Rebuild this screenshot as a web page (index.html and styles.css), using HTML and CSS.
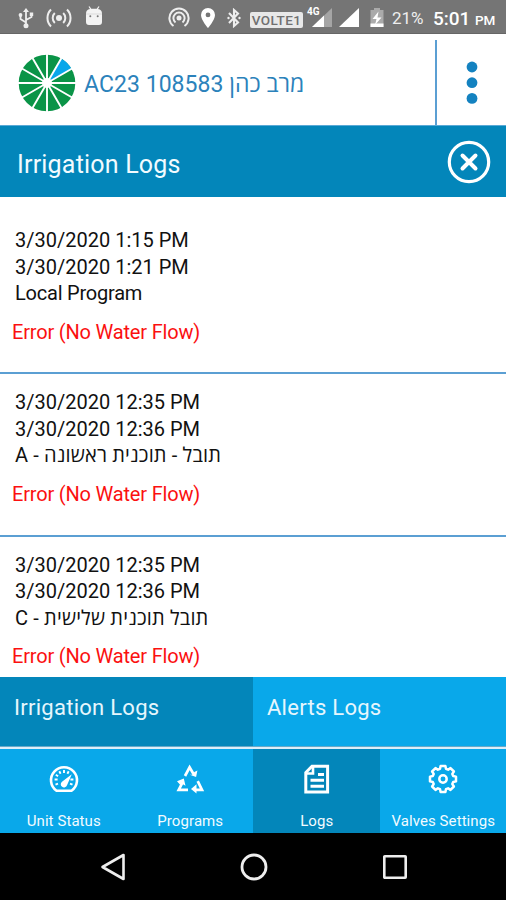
FILE: index.html
```html
<!DOCTYPE html>
<html lang="en">
<head>
<meta charset="utf-8">
<title>Irrigation Logs</title>
<link rel="stylesheet" href="styles.css">
</head>
<body>
<div class="phone">
  <div class="status">
    <svg class="i-usb" width="16" height="22" viewBox="0 0 16 22" fill="none" stroke="#eee" stroke-width="1.8"><path d="M8 3v15M8 15.500L2.500 12V8M8 13l5.500-3V7"/><path d="M5 5l3-4 3 4z" fill="#eee" stroke="none"/><circle cx="8" cy="18.800" r="2.500" fill="#eee" stroke="none"/><circle cx="2.500" cy="8" r="1.900" fill="#eee" stroke="none"/><path d="M11.800 5.500h3.400v3.400h-3.400z" fill="#eee" stroke="none"/></svg>
    <svg class="i-cast" width="26" height="20" viewBox="0 0 26 20" fill="none" stroke="#eee" stroke-width="2"><circle cx="13" cy="10" r="3" fill="#eee" stroke="none"/><path d="M8.800 5a7 7 0 0 0 0 10M17.200 5a7 7 0 0 1 0 10M5 1.500a12 12 0 0 0 0 17M21 1.500a12 12 0 0 1 0 17"/></svg>
    <svg class="i-droid" width="18" height="20" viewBox="0 0 18 20"><path d="M1 7.500Q1 3.500 5 3L3.500.8l1-.6L6.300 2.700h5.400L13.500.2l1 .6L13 3q4 .5 4 4.500V16q0 3-3 3H4q-3 0-3-3z" fill="#f3f3f3"/><path d="M1 8h16" stroke="#ccc" stroke-width=".6"/><circle cx="5.300" cy="10.200" r="1" fill="#777"/><circle cx="12.700" cy="10.200" r="1" fill="#777"/></svg>
    <svg class="i-hot" width="22" height="20" viewBox="0 0 22 20" fill="none" stroke="#eee" stroke-width="2"><circle cx="11" cy="11" r="2.500" fill="#eee" stroke="none"/><path d="M7.500 15.500a5.600 5.600 0 1 1 7 0M5.500 19a9.600 9.600 0 1 1 11 0"/></svg>
    <svg class="i-pin" width="14" height="20" viewBox="0 0 14 20"><path fill="#fff" fill-rule="evenodd" d="M7 0a7 7 0 0 1 7 7c0 5-7 13-7 13S0 12 0 7a7 7 0 0 1 7-7zm0 4.500a2.400 2.400 0 1 0 0 4.800 2.400 2.400 0 0 0 0-4.800z"/></svg>
    <svg class="i-bt" width="14" height="20" viewBox="0 0 14 20" fill="none" stroke="#eee" stroke-width="2.100"><path d="M2 5l9 9.500L7 18V2l4 3.500L2 15"/><circle cx="1.500" cy="10" r="1.200" fill="#eee" stroke="none"/><circle cx="12.500" cy="10" r="1.200" fill="#eee" stroke="none"/></svg>
    <span class="volte">VOLTE1</span>
    <span class="cell"><span class="g4">4G</span><svg width="20" height="19" viewBox="0 0 20 19"><path d="M20 0v19H0z" fill="#a5a5a5"/><path d="M12 7.600V19H0z" fill="#fff"/></svg></span>
    <svg class="i-sig" width="20" height="19" viewBox="0 0 20 19"><path d="M20 0v19H0z" fill="#fff"/></svg>
    <svg class="i-bat" width="14" height="19" viewBox="0 0 14 19"><path d="M4 0h6v2h3.500v17H.5V2H4z" fill="#aaa"/><path d="M.5 15.500h13V19H.5z" fill="#fff"/><path d="M8.500 3.500L2.500 11h4l-1.500 6 6.500-7.500h-4z" fill="#fff"/></svg>
    <span class="pct">21%</span>
    <span class="clock">5:01</span><span class="pm">PM</span>
  </div>

  <header class="head">
    <svg class="logo" width="58" height="58" viewBox="-29 -29 58 58">
      <circle r="28.300" fill="#0a9447"/>
      <path d="M0 0L14.150-24.500A28.300 28.300 0 0 1 24.500-14.150z" fill="#09a7ea"/>
      <path stroke="#fff" stroke-width="1.900" d="M-29 0H29M0-29V29M-25.100-14.500L25.100 14.500M-25.100 14.500L25.100-14.500M-14.500-25.100L14.500 25.100M-14.500 25.100L14.500-25.100"/>
      <circle r="5" fill="#fff"/>
    </svg>
    <span class="unit">AC23 108583 מרב כהן</span>
    <span class="menu"><svg width="12" height="44" viewBox="0 0 12 44" fill="#1482c0"><circle cx="6" cy="6" r="5.400"/><circle cx="6" cy="21.700" r="5.400"/><circle cx="6" cy="37.400" r="5.400"/></svg></span>
  </header>

  <div class="title">
    <h1>Irrigation Logs</h1>
    <svg width="44" height="44" viewBox="0 0 44 44" fill="none" stroke="#fff"><circle cx="22" cy="22" r="19.700" stroke-width="3.200"/><path d="M15.500 15.500l13 13M28.500 15.500l-13 13" stroke-width="4" stroke-linecap="round"/></svg>
  </div>

  <main class="list">
    <section class="log first"><p>3/30/2020 1:15 PM</p><p>3/30/2020 1:21 PM</p><p class="local">Local Program</p><p class="err">Error (No Water Flow)</p></section>
    <section class="log"><p>3/30/2020 12:35 PM</p><p>3/30/2020 12:36 PM</p><p class="name">A - תובל - תוכנית ראשונה</p><p class="err">Error (No Water Flow)</p></section>
    <section class="log"><p>3/30/2020 12:35 PM</p><p>3/30/2020 12:36 PM</p><p class="name">C - תובל תוכנית שלישית</p><p class="err">Error (No Water Flow)</p></section>
  </main>

  <div class="tabs"><span class="tab on">Irrigation Logs</span><span class="tab">Alerts Logs</span></div>

  <nav class="nav">
    <div class="item"><svg width="30" height="30" viewBox="0 0 30 30" fill="none" stroke="#fff"><path d="M7.500 26.800a13 13 0 1 1 15 0z" stroke-width="2.600" stroke-linejoin="round"/><path d="M15 6v3M10.300 7.300l1.300 2.500M19.700 7.300l-1.300 2.500M6.800 10.800l2.300 1.500M5.600 15.500h3M6.500 20.700l2.500-1M24.400 15.500h-3M23.500 20.700l-2.500-1" stroke-width="1.900"/><path d="M22.800 10.200l-4.800 11a3.200 3.200 0 1 1-5-3.500z" fill="#fff" stroke="none"/></svg><span>Unit Status</span></div>
    <div class="item"><svg width="30" height="30" viewBox="0 0 30 30" fill="none" stroke="#fff" stroke-width="2.700"><path d="M10 12L14.600 3.300l4.200 7.200"/><path d="M14.800 10.800l6.300 2.200 1.300-6.600-3 1.700-1.700 2.600z" fill="#fff" stroke="none"/><path d="M13 25.900H3.700l3.600-7"/><path d="M2 17.200l6.800-2.700 1.700 7.200-3-1.600-2.600.3z" fill="#fff" stroke="none"/><path d="M22.700 17.200l4.300 8.700H20"/><path d="M21.500 20.300v9.200L16 25z" fill="#fff" stroke="none"/></svg><span>Programs</span></div>
    <div class="item on"><svg width="30" height="30" viewBox="0 0 30 30" fill="none" stroke="#fff"><path d="M10 2.200h15.600v25.800H3.800V8.500z" stroke-width="3"/><path d="M4.500 9.500h6.500V2.500" stroke-width="2.600"/><path d="M16 10.500h6M8.500 16.300h13.500M8.500 22.200h13.500" stroke-width="2.900"/></svg><span>Logs</span></div>
    <div class="item"><svg width="30" height="30" viewBox="-15 -15 30 30" fill="none" stroke="#fff" stroke-width="2.500" stroke-linejoin="round"><path d="M-3-10.200L-2.400-13H2.400L3-10.200L5.100-9.300L7.500-10.900L10.900-7.500L9.300-5.100L10.200-3L13-2.400V2.400L10.200 3L9.300 5.100L10.900 7.500L7.500 10.900L5.100 9.300L3 10.200L2.400 13H-2.400L-3 10.200L-5.100 9.300L-7.500 10.900L-10.900 7.500L-9.300 5.100L-10.200 3L-13 2.400V-2.400L-10.200-3L-9.300-5.100L-10.900-7.500L-7.500-10.900L-5.100-9.300z"/><circle r="3.700"/></svg><span>Valves Settings</span></div>
  </nav>

  <div class="sys">
    <svg width="26" height="28" viewBox="0 0 26 28" fill="none" stroke="#eee" stroke-width="2.600" stroke-linejoin="round"><path d="M23.500 2v24L2.500 14z"/></svg>
    <svg width="28" height="28" viewBox="0 0 28 28" fill="none" stroke="#eee" stroke-width="2.800"><circle cx="14" cy="14" r="12"/></svg>
    <svg width="26" height="26" viewBox="0 0 26 26" fill="none" stroke="#eee" stroke-width="2.600"><rect x="2.300" y="2.300" width="21.400" height="21.400" rx=".5"/></svg>
  </div>
</div>
</body>
</html>
```

FILE: styles.css
```css
* { box-sizing: border-box; }
body { margin: 0; background: #fff; font-family: Roboto, "Open Sans", "Liberation Sans", sans-serif; }
svg { display: block; flex: none; }
h1, p { margin: 0; font-weight: 400; white-space: nowrap; }
span { white-space: nowrap; }
.phone { width: 506px; height: 900px; display: flex; flex-direction: column; overflow: hidden; }

.status { height: 34px; flex: none; display: flex; align-items: flex-start; padding: 7px 0 0 18px; background: #757575; border-bottom: 1px solid #666; color: #eee; }
.i-cast { margin: 1px 0 0 12px; }
.i-droid { margin: -1px 0 0 13px; }
.i-hot { margin: 0 0 0 65px; }
.i-pin { margin: 1px 0 0 11px; }
.i-bt { margin: 1px 0 0 12px; }
.volte { margin: 5px 0 0 9px; width: 53px; height: 16px; border-radius: 2px; background: #e8e8e8; color: #707070; font-size: 13.500px; font-weight: 500; line-height: 16px; letter-spacing: .4px; text-align: center; }
.cell { position: relative; margin: 1px 0 0 9px; }
.g4 { position: absolute; left: -5px; top: -2px; font-size: 10px; line-height: 12px; font-weight: 700; color: #fff; }
.i-sig { margin: 1px 0 0 7px; }
.i-bat { margin: 1px 0 0 11px; }
.pct { margin: 0 0 0 8px; width: 41px; font-size: 17px; line-height: 22px; }
.clock { width: 42px; font-size: 19px; line-height: 24px; font-weight: 500; color: #fff; }
.pm { margin-top: 3px; font-size: 13.500px; line-height: 20px; font-weight: 500; color: #fff; }

.head { height: 92px; flex: none; display: flex; align-items: center; padding: 6px 0 0 18px; border-bottom: 1px solid #5aa9d6; }
.unit { flex: 1; margin-left: 8px; font-size: 23px; line-height: 30px; letter-spacing: .05px; color: #2b82bb; padding-top: 4px; }
.menu { align-self: stretch; width: 71px; display: flex; align-items: center; justify-content: center; border-left: 2px solid #5b9fd3; }

.title { height: 71px; flex: none; display: flex; align-items: center; justify-content: space-between; padding: 0 15px 0 17px; background: #0386ba; color: #f2fbff; }
h1 { font-size: 25px; line-height: 30px; letter-spacing: .2px; padding-top: 6px; }

.list { height: 480px; flex: none; overflow: hidden; font-size: 20px; line-height: 26.600px; color: #111; }
.log { height: 162.500px; padding: 15px 0 0 15px; border-bottom: 2px solid #5b9fd3; }
.log.first { height: 177px; padding-top: 30px; }
.local { letter-spacing: -.22px; }
.name { letter-spacing: .15px; }
.err { margin: 12px 0 0 -3px; letter-spacing: -.18px; color: #fb1010; }

.tabs { height: 70px; flex: none; display: flex; border-bottom: 1px solid #67a9c8; color: #e6f6fd; }
.tab { width: 253px; padding: 16px 0 0 14px; font-size: 22px; line-height: 30px; letter-spacing: .27px; background: #09a8ea; }
.tab.on { background: #0386ba; }

.nav { height: 86px; flex: none; display: flex; border-top: 2px solid #dceefa; background: #09a8ea; color: #f2fbff; }
.item { width: 126.500px; display: flex; flex-direction: column; align-items: center; padding: 15px 0 0 1px; font-size: 15px; line-height: 20px; letter-spacing: .08px; }
.item span { margin-top: 17px; }
.item.on { background: #0386ba; }

.sys { height: 67px; flex: none; display: flex; align-items: center; justify-content: center; gap: 114px; padding-left: 1px; background: #000; }
```
